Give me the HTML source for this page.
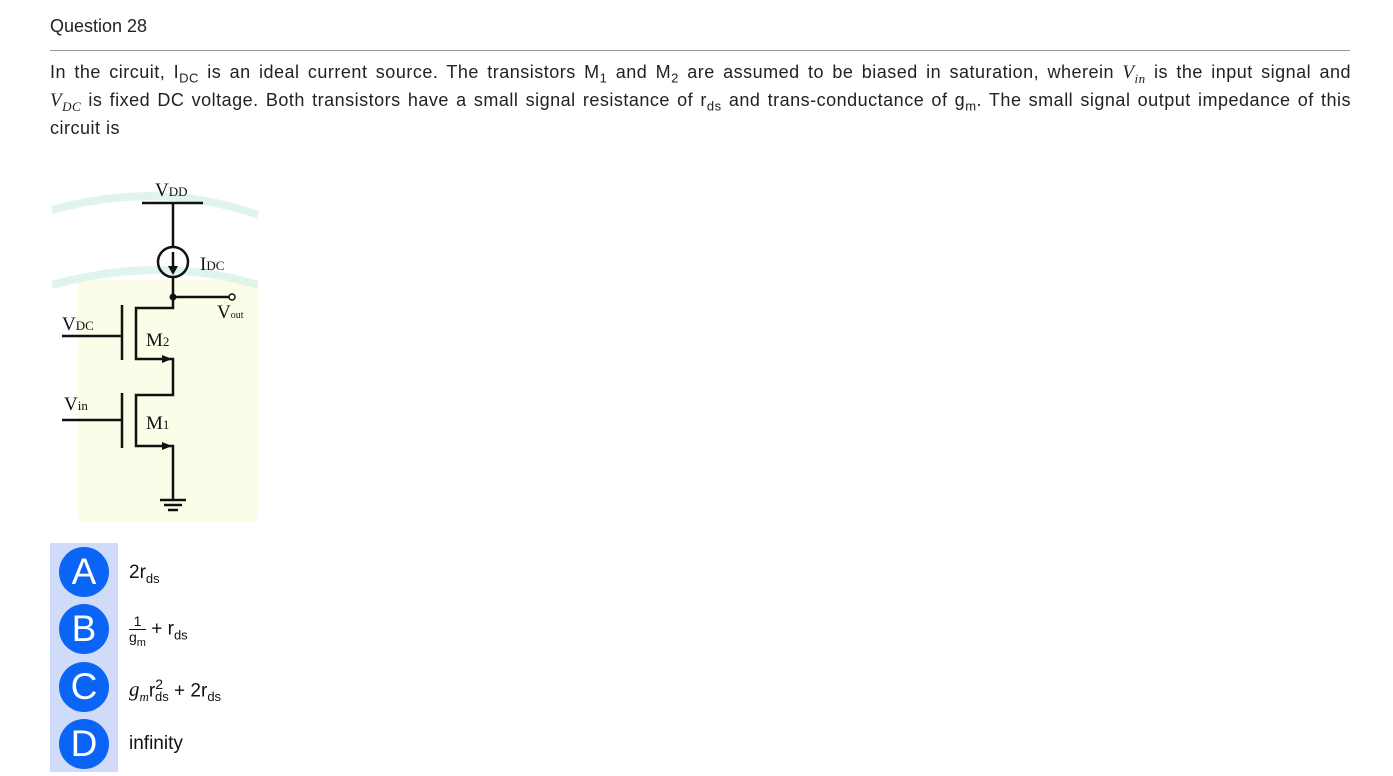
<!DOCTYPE html>
<html><head><meta charset="utf-8"><style>
body{margin:0;background:#fff;font-family:"Liberation Sans",sans-serif;color:#222;}
.t{position:absolute;left:50px;top:16px;font-size:18px;}
.hr{position:absolute;left:50px;top:50px;width:1300px;height:1px;background:#999;}
.p{position:absolute;left:50px;top:58px;width:1301px;font-size:18px;letter-spacing:0.5px}
.p div{height:28px;line-height:28px;white-space:nowrap}
.j{text-align:justify;text-align-last:justify;white-space:normal!important}
.p i{font-family:"Liberation Serif",serif;font-size:19px}
.opts{position:absolute;left:50px;top:543px;width:68px;height:229px;background:#cfdbf9;}
.c{position:absolute;left:59px;width:50px;height:50px;border-radius:50%;background:#0a64f5;color:#fff;font-size:37px;text-align:center;line-height:50px;}
.o{position:absolute;left:129px;font-size:19px;color:#111}
sub{font-size:13px;line-height:0}
</style></head><body>
<div class="t">Question 28</div>
<div class="hr"></div>
<div class="p">
<div class="j">In the circuit, I<sub>DC</sub> is an ideal current source. The transistors M<sub>1</sub> and M<sub>2</sub> are assumed to be biased in saturation, wherein <i>V<sub>in</sub></i> is the input signal and</div>
<div class="j"><i>V<sub>DC</sub></i> is fixed DC voltage. Both transistors have a small signal resistance of r<sub>ds</sub> and trans-conductance of g<sub>m</sub>. The small signal output impedance of this</div>
<div>circuit is</div>
</div>
<svg style="position:absolute;left:50px;top:178px" width="210" height="346" viewBox="50 178 210 346">
<rect x="50" y="178" width="210" height="346" fill="#fff"/>
<path d="M78 280 L258 280 L258 522 L78 522Z" fill="#fbfde9"/>
<path d="M52 210 Q160 180 258 215" stroke="#dff4ea" stroke-width="8" fill="none"/>
<path d="M52 285 Q160 255 258 285" stroke="#dff4ea" stroke-width="8" fill="none"/>
<g stroke="#111" stroke-width="2.5" fill="none">
<path d="M142 203H203M173 203V247M173 277V297H232M173 297V308H136V359H173V395H136V446H173V500M122 305V360M122 393V448M62 336H122M62 420H122M160 500H186M164 505H182M168 510H178"/>
<circle cx="173" cy="262" r="15"/>
<path d="M173 252V272"/>
</g>
<circle cx="173" cy="297" r="3.5" fill="#111"/>
<circle cx="232" cy="297" r="3" fill="#fff" stroke="#111" stroke-width="1.5"/>
<path d="M168 266L173 275L178 266Z M162 355L172 359L162 363Z M162 442L172 446L162 450Z" fill="#111"/>
<g font-family="Liberation Serif,serif" fill="#111" font-size="19">
<text x="155" y="196">V<tspan font-size="13">DD</tspan></text>
<text x="200" y="270">I<tspan font-size="13">DC</tspan></text>
<text x="217" y="318">V<tspan font-size="10">out</tspan></text>
<text x="62" y="330">V<tspan font-size="13">DC</tspan></text>
<text x="146" y="346">M<tspan font-size="13">2</tspan></text>
<text x="64" y="410">V<tspan font-size="13">in</tspan></text>
<text x="146" y="429">M<tspan font-size="13">1</tspan></text>
</g>
</svg>
<div class="opts"></div>
<div class="c" style="top:547px">A</div>
<div class="c" style="top:604px">B</div>
<div class="c" style="top:662px">C</div>
<div class="c" style="top:719px">D</div>
<div class="o" style="top:562px">2r<sub>ds</sub></div>
<div class="o" style="top:614px"><span style="display:inline-block;vertical-align:middle;text-align:center;font-size:14px;line-height:15px"><span style="display:block;border-bottom:1px solid #111;padding:0 3px">1</span>g<sub style="font-size:11px">m</sub></span> + r<sub>ds</sub></div>
<div class="o" style="top:676px"><i style="font-family:'Liberation Serif',serif;font-size:21px">g<sub>m</sub></i>r<sup style="font-size:14px">2</sup><sub style="margin-left:-8px">ds</sub> + 2r<sub>ds</sub></div>
<div class="o" style="top:733px">infinity</div>
</body></html>
